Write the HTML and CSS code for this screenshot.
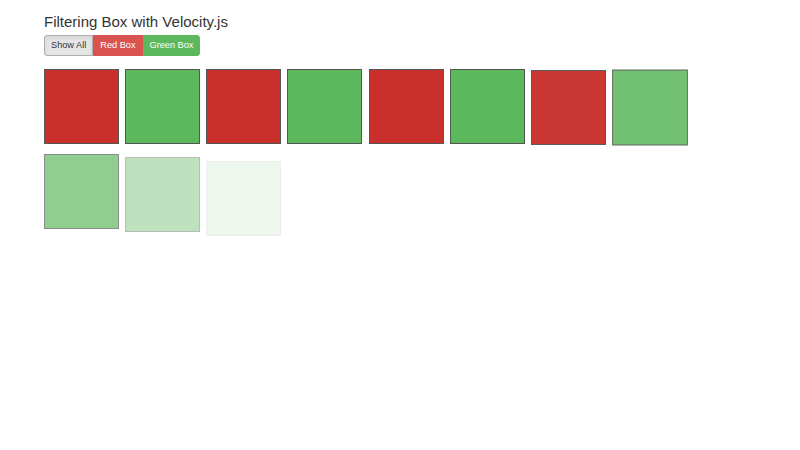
FILE: index.html
```html
<!DOCTYPE html>
<html>
<head>
<meta charset="utf-8">
<link rel="stylesheet" href="styles.css">
</head>
<body>
<div class="page">
  <h1 class="title">Filtering Box with Velocity.js</h1>
  <div class="btn-group">
    <button class="btn btn-default active">Show All</button>
    <button class="btn btn-red">Red Box</button>
    <button class="btn btn-green">Green Box</button>
  </div>
  <div class="boxes">
    <div class="box red"></div>
    <div class="box green"></div>
    <div class="box red"></div>
    <div class="box green"></div>
    <div class="box red"></div>
    <div class="box green"></div>
    <div class="box red" style="opacity:0.96;transform:translateY(1px)"></div>
    <div class="box green" style="opacity:0.86;transform:translate(0.5px,1px) scale(1.01)"></div>
    <div class="box green" style="opacity:0.68;transform:translateY(4px)"></div>
    <div class="box green" style="opacity:0.40;transform:translateY(7px)"></div>
    <div class="box green" style="opacity:0.10;transform:translateY(11px)"></div>
  </div>
</div>
</body>
</html>
```
FILE: styles.css
```css
html, body {
  margin: 0;
  padding: 0;
  background: #fff;
}
body {
  font-family: "Liberation Sans", Arial, sans-serif;
  color: #333;
  min-height: 450px;
}
.page {
  padding: 13px 0 40px 44px;
}
.title {
  margin: 0;
  font-size: 15px;
  line-height: 17px;
  font-weight: normal;
  color: #333;
}
.btn-group {
  display: flex;
  margin-top: 5px;
}
.btn {
  font-family: "Liberation Sans", Arial, sans-serif;
  font-size: 9.2px;
  line-height: 11px;
  height: 21px;
  padding: 4px 6px;
  border: 1px solid transparent;
  margin: 0;
  cursor: pointer;
}
.btn-default {
  background: #e6e6e6;
  border-color: #adadad;
  color: #333;
  border-radius: 3px 0 0 3px;
  box-shadow: inset 0 2px 4px rgba(0,0,0,0.08);
}
.btn-red {
  background: #d9534f;
  border-color: #d9534f;
  color: #fff;
}
.btn-green {
  background: #5cb85c;
  border-color: #5cb85c;
  color: #fff;
  border-radius: 0 3px 3px 0;
}
.boxes {
  display: flex;
  flex-wrap: wrap;
  gap: 6px 6.14px;
  max-width: 700px;
  margin-top: 13px;
}
.box {
  width: 73px;
  height: 73px;
  border: 1px solid #555;
}
.box.red {
  background: #c9302c;
}
.box.green {
  background: #5cb85c;
}
```
